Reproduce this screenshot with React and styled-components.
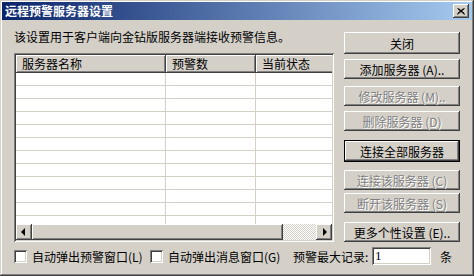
import styled, { createGlobalStyle } from "styled-components";

const GlobalStyle = createGlobalStyle`
  html, body {
    margin: 0;
    padding: 0;
    background: #d4d0c8;
  }
  body {
    font-family: "Noto Sans CJK SC", "Liberation Sans", sans-serif;
    font-size: 12px;
    color: #000;
  }
`;

const raised = `
  box-shadow: inset -1px -1px #404040, inset 1px 1px #ffffff,
    inset -2px -2px #808080, inset 2px 2px #d4d0c8;
`;

const sunken = `
  box-shadow: inset 1px 1px #808080, inset -1px -1px #ffffff,
    inset 2px 2px #404040, inset -2px -2px #d4d0c8;
`;

const Window = styled.div`
  width: 474px;
  height: 276px;
  box-sizing: border-box;
  padding: 2px;
  background: #d4d0c8;
  box-shadow: inset -1px -1px #404040, inset 1px 1px #d4d0c8,
    inset -2px -2px #808080, inset 2px 2px #ffffff;
  display: flex;
  flex-direction: column;
`;

const TitleBar = styled.div`
  height: 18px;
  display: flex;
  align-items: center;
  justify-content: space-between;
  padding: 0 3px 0 3px;
  background: linear-gradient(to right, #0a246a, #a6caf0);
  color: #fff;
  font-weight: bold;
  font-size: 12px;
  line-height: 18px;
`;

const CloseBox = styled.div`
  width: 16px;
  height: 14px;
  background: #d4d0c8;
  ${raised}
  display: flex;
  align-items: center;
  justify-content: center;
`;

const Body = styled.div`
  padding: 10px 12px 0 12px;
  display: flex;
  flex-direction: column;
`;

const Main = styled.div`
  display: flex;
  height: 212px;
`;

const LeftCol = styled.div`
  width: 320px;
  display: flex;
  flex-direction: column;
`;

const Desc = styled.div`
  height: 14px;
  line-height: 14px;
  margin-bottom: 9px;
  white-space: nowrap;
`;

const ListView = styled.div`
  width: 320px;
  height: 189px;
  box-sizing: border-box;
  padding: 2px;
  background: #fff;
  ${sunken}
  display: flex;
  flex-direction: column;
`;

const ListInner = styled.div`
  flex: 1;
  overflow: hidden;
  display: flex;
  flex-direction: column;
`;

const HeaderRow = styled.div`
  display: flex;
  height: 18px;
  flex-shrink: 0;
`;

const HeaderCell = styled.div`
  width: ${(p) => p.$w}px;
  flex-shrink: 0;
  box-sizing: border-box;
  padding-left: 6px;
  line-height: 18px;
  background: #d4d0c8;
  ${raised}
  white-space: nowrap;
`;

const Row = styled.div`
  display: flex;
  height: 13px;
  flex-shrink: 0;
  box-sizing: border-box;
  border-bottom: 1px solid #d4d0c8;
`;

const Cell = styled.div`
  width: ${(p) => p.$w}px;
  flex-shrink: 0;
  box-sizing: border-box;
  border-right: 1px solid #d4d0c8;
`;

const HScroll = styled.div`
  height: 16px;
  flex-shrink: 0;
  display: flex;
`;

const ScrollBtn = styled.div`
  width: 16px;
  height: 16px;
  flex-shrink: 0;
  background: #d4d0c8;
  ${raised}
  display: flex;
  align-items: center;
  justify-content: center;
`;

const Arrow = styled.span`
  width: 0;
  height: 0;
  border-top: 4px solid transparent;
  border-bottom: 4px solid transparent;
  ${(p) =>
    p.$dir === "left"
      ? "border-right: 4px solid #000; margin-left: -2px;"
      : "border-left: 4px solid #000; margin-left: 2px;"}
`;

const Thumb = styled.div`
  width: 251px;
  height: 16px;
  flex-shrink: 0;
  background: #d4d0c8;
  ${raised}
`;

const Track = styled.div`
  flex: 1;
  background: repeating-conic-gradient(#d4d0c8 0 25%, #ffffff 0 50%) 0 0 / 2px 2px;
`;

const RightCol = styled.div`
  width: 116px;
  margin-left: 10px;
  display: flex;
  flex-direction: column;
`;

const Button = styled.button`
  width: 116px;
  height: ${(p) => (p.$tall ? 22 : 20)}px;
  margin-top: ${(p) => p.$mt}px;
  padding: 0;
  box-sizing: border-box;
  font-family: inherit;
  font-size: 12px;
  white-space: pre;
  background: #d4d0c8;
  color: #000;
  border: ${(p) => (p.$def ? "1px solid #000" : "none")};
  ${raised}
  &:disabled {
    color: #808080;
    text-shadow: 1px 1px #ffffff;
  }
`;

const Footer = styled.div`
  display: flex;
  align-items: center;
  height: 18px;
  margin-top: 5px;
`;

const CheckItem = styled.label`
  width: ${(p) => p.$w}px;
  display: flex;
  align-items: center;
  white-space: nowrap;
`;

const CheckBox = styled.span`
  width: 13px;
  height: 13px;
  flex-shrink: 0;
  background: #fff;
  ${sunken}
  margin-right: 5px;
`;

const Label = styled.span`
  width: 79px;
  white-space: nowrap;
`;

const Input = styled.div`
  width: 59px;
  height: 18px;
  box-sizing: border-box;
  padding: 2px 3px;
  background: #fff;
  ${sunken}
  line-height: 14px;
  font-family: "Liberation Serif", serif;
  font-size: 13px;
`;

const Unit = styled.span`
  margin-left: 9px;
`;

const columns = [150, 90, 100];

export default function App() {
  const rows = Array.from({ length: 12 });
  return (
    <>
      <GlobalStyle />
      <Window>
        <TitleBar>
          <span>远程预警服务器设置</span>
          <CloseBox>
            <svg width="8" height="7" viewBox="0 0 8 7">
              <path d="M0.5 0.5 L7.5 6.5 M1.5 0.5 L7.5 5.5 M7.5 0.5 L0.5 6.5 M6.5 0.5 L0.5 5.5" stroke="#000" strokeWidth="1" fill="none" />
            </svg>
          </CloseBox>
        </TitleBar>
        <Body>
          <Main>
            <LeftCol>
              <Desc>该设置用于客户端向金钻版服务器端接收预警信息。</Desc>
              <ListView>
                <ListInner>
                  <HeaderRow>
                    <HeaderCell $w={columns[0]}>服务器名称</HeaderCell>
                    <HeaderCell $w={columns[1]}>预警数</HeaderCell>
                    <HeaderCell $w={columns[2]}>当前状态</HeaderCell>
                  </HeaderRow>
                  {rows.map((_, i) => (
                    <Row key={i}>
                      {columns.map((w, j) => (
                        <Cell key={j} $w={w} />
                      ))}
                    </Row>
                  ))}
                </ListInner>
                <HScroll>
                  <ScrollBtn>
                    <Arrow $dir="left" />
                  </ScrollBtn>
                  <Thumb />
                  <Track />
                  <ScrollBtn>
                    <Arrow $dir="right" />
                  </ScrollBtn>
                </HScroll>
              </ListView>
            </LeftCol>
            <RightCol>
              <Button $tall $mt={2}>关闭</Button>
              <Button $mt={5}>添加服务器 (A)..</Button>
              <Button $mt={7} disabled>修改服务器 (M)..</Button>
              <Button $mt={5} disabled>删除服务器 (D)</Button>
              <Button $tall $def $mt={9}>连接全部服务器</Button>
              <Button $mt={8} disabled>连接该服务器 (C)</Button>
              <Button $mt={3} disabled>断开该服务器 (S)</Button>
              <Button $mt={9}>更多个性设置 (E)..</Button>
            </RightCol>
          </Main>
          <Footer>
            <CheckItem $w={136}>
              <CheckBox />
              自动弹出预警窗口(L)
            </CheckItem>
            <CheckItem $w={143}>
              <CheckBox />
              自动弹出消息窗口(G)
            </CheckItem>
            <Label>预警最大记录:</Label>
            <Input>1</Input>
            <Unit>条</Unit>
          </Footer>
        </Body>
      </Window>
    </>
  );
}
